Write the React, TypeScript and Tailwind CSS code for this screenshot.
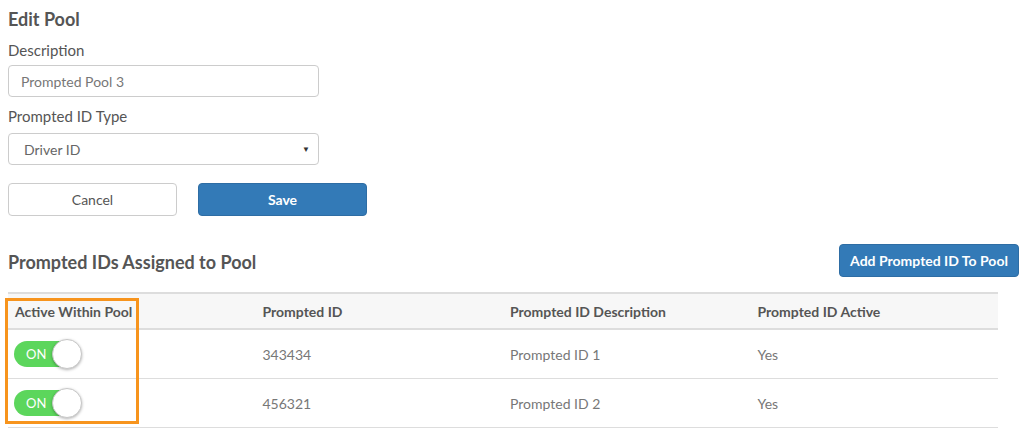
import React from "react";

function Toggle() {
  return (
    <div className="relative flex h-[30px] w-[68px] items-center">
      <div className="flex h-[26px] w-[61px] items-center rounded-full bg-[#5cd65c] pl-[12px] text-[13px] leading-none text-white">
        ON
      </div>
      <div className="absolute right-0 top-0 h-[30px] w-[30px] rounded-full border border-[#c8c8c8] bg-white shadow-[0_1px_3px_rgba(0,0,0,0.3)]" />
    </div>
  );
}

const rows = [
  { id: "343434", desc: "Prompted ID 1", active: "Yes" },
  { id: "456321", desc: "Prompted ID 2", active: "Yes" },
];

export default function App() {
  return (
    <div
      className="h-[431px] w-[1024px] overflow-hidden bg-white pl-2 text-[#555]"
      style={{ fontFamily: "Lato, 'Open Sans', sans-serif" }}
    >
      <h2 className="pt-[8px] text-[18px] font-bold leading-[22px] text-[#555]">Edit Pool</h2>
      <label className="mt-[11px] block text-[15px] leading-[18px] text-[#555]">Description</label>
      <div className="mt-[6px] flex h-[32px] w-[311px] items-center rounded-[4px] border border-[#ccc] px-[12px] text-[14px] text-[#777]">
        Prompted Pool 3
      </div>
      <label className="mt-[10px] block text-[15px] leading-[18px] text-[#555]">Prompted ID Type</label>
      <div className="mt-[8px] flex h-[32px] w-[311px] items-center justify-between rounded-[4px] border border-[#ccc] pl-[15px] pr-[8px] text-[14px] text-[#666]">
        <span>Driver ID</span>
        <span className="text-[8px] text-[#333]">▼</span>
      </div>
      <div className="mt-[18px] flex gap-[21px]">
        <button className="h-[33px] w-[169px] rounded-[4px] border border-[#ccc] bg-white text-[14px] text-[#555]">
          Cancel
        </button>
        <button className="h-[33px] w-[169px] rounded-[4px] border border-[#2e6da4] bg-[#337ab7] text-[14px] font-bold text-white">
          Save
        </button>
      </div>
      <div className="mt-[28px] flex w-[1011px] items-center justify-between">
        <h3 className="mt-[3px] text-[18px] font-bold leading-[22px] text-[#555]">Prompted IDs Assigned to Pool</h3>
        <button className="h-[33px] w-[180px] rounded-[4px] border border-[#2e6da4] bg-[#337ab7] text-[14px] font-bold text-white">
          Add Prompted ID To Pool
        </button>
      </div>
      <div className="relative mt-[15px] w-[990px]">
        <div className="grid h-[38px] grid-cols-4 items-center border-y-2 border-[#ddd] bg-[#f7f7f7] text-[14px] font-bold text-[#555]">
          <div className="px-[7px]">Active Within Pool</div>
          <div className="px-[7px]">Prompted ID</div>
          <div className="px-[7px]">Prompted ID Description</div>
          <div className="px-[7px]">Prompted ID Active</div>
        </div>
        {rows.map((r) => (
          <div key={r.id} className="grid h-[49px] grid-cols-4 items-center border-b border-[#ddd] text-[14px] text-[#777]">
            <div className="px-[6px]">
              <Toggle />
            </div>
            <div className="px-[7px]">{r.id}</div>
            <div className="px-[7px]">{r.desc}</div>
            <div className="px-[7px]">{r.active}</div>
          </div>
        ))}
        <div className="pointer-events-none absolute left-[-3px] top-[6px] h-[126px] w-[134px] border-[3px] border-[#f7941d]" />
      </div>
    </div>
  );
}
